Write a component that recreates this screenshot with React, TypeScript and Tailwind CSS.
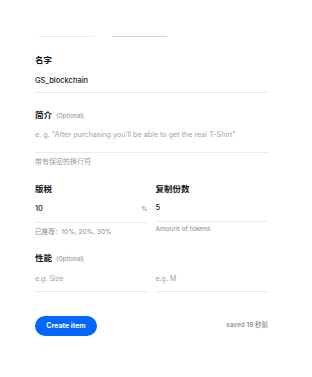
// Create item form — 312x377 snapshot
const font = "font-['Inter','Noto_Sans_CJK_SC',sans-serif]";

function Label({ text, optional }: { text: string; optional?: boolean }) {
  return (
    <div className="flex items-baseline gap-[4px] leading-[12px]">
      <span className="text-[8.5px] font-bold text-[#141414]">{text}</span>
      {optional && <span className="text-[6px] text-[#8a8a8a]">(Optional)</span>}
    </div>
  );
}

export default function App() {
  return (
    <div className={`w-[312px] h-[377px] bg-white pt-[36px] ${font}`}>
      <div className="flex ml-[39px]">
        <div className="w-[55px] h-px bg-[#efefef]" />
        <div className="w-[55px] h-px ml-[18px] bg-[#c9d6f2]" />
      </div>

      <div className="ml-[35px] w-[233px]">
        <div className="mt-[17px]">
          <Label text="名字" />
          <div className="mt-[9px] pb-[5px] border-b border-[#ececec] text-[7.5px] leading-[12px] font-medium text-[#222]">
            GS_blockchain
          </div>
        </div>

        <div className="mt-[16px]">
          <Label text="简介" optional />
          <div className="mt-[7px] pb-[11px] border-b border-[#ececec] text-[7.2px] leading-[12px] text-[#a3a3a3]">
            e. g. "After purchasing you'll be able to get the real T-Shirt"
          </div>
          <div className="mt-[3px] text-[7px] leading-[12px] text-[#9a9a9a]">带有保密的换行符</div>
        </div>

        <div className="mt-[15px] grid grid-cols-2 gap-x-[8px]">
          <div>
            <Label text="版税" />
            <div className="mt-[8px] pb-[7px] border-b border-[#ececec] flex justify-between text-[7.5px] leading-[12px] font-medium text-[#222]">
              <span>10</span>
              <span className="text-[6.5px] font-normal text-[#888]">%</span>
            </div>
            <div className="mt-[3px] text-[6.6px] leading-[12px] text-[#8a8a8a]">已推荐：10%, 20%, 30%</div>
          </div>
          <div>
            <Label text="复制份数" />
            <div className="mt-[7px] pb-[7px] border-b border-[#ececec] text-[7.5px] leading-[12px] font-medium text-[#222]">
              5
            </div>
            <div className="mt-[1px] text-[6.6px] leading-[12px] text-[#8a8a8a]">Amount of tokens</div>
          </div>
        </div>

        <div className="mt-[14px]">
          <Label text="性能" optional />
          <div className="mt-[8px] grid grid-cols-2 gap-x-[8px]">
            <div className="pb-[6px] border-b border-[#ececec] text-[7px] leading-[12px] text-[#a3a3a3]">e.g. Size</div>
            <div className="pb-[6px] border-b border-[#ececec] text-[7px] leading-[12px] text-[#a3a3a3]">e.g. M</div>
          </div>
        </div>

        <div className="mt-[24px] flex items-center justify-between">
          <button className="w-[62px] h-[20px] rounded-full bg-[#0066ff] text-white text-[7px] font-bold">
            Create item
          </button>
          <span className="text-[6.5px] font-medium text-[#8a8a8a]">saved 19 秒前</span>
        </div>
      </div>
    </div>
  );
}
